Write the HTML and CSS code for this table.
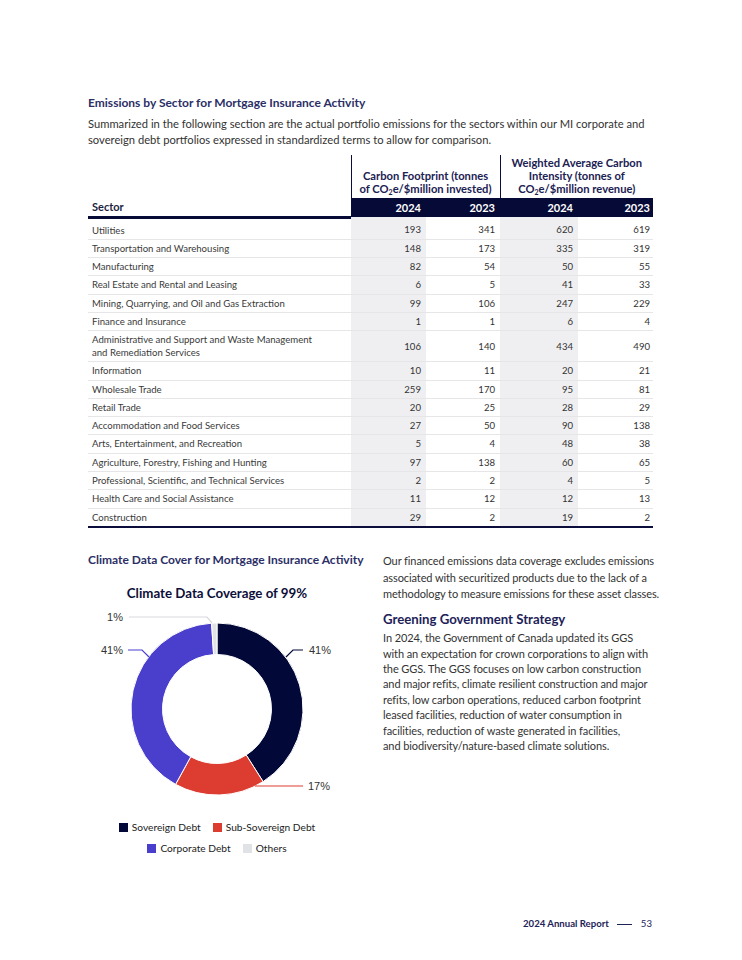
FILE: index.html
```html
<!DOCTYPE html>
<html lang="en">
<head>
<meta charset="utf-8">
<title>Emissions by Sector</title>
<link rel="stylesheet" href="styles.css">
</head>
<body>
<div class="page">
  <h2 class="sec-title">Emissions by Sector for Mortgage Insurance Activity</h2>
  <p class="intro">Summarized in the following section are the actual portfolio emissions for the sectors within our MI corporate and<br>sovereign debt portfolios expressed in standardized terms to allow for comparison.</p>

  <table class="em">
    <colgroup>
      <col class="c-sector"><col class="c-a"><col class="c-b"><col class="c-c"><col class="c-d">
    </colgroup>
    <thead>
      <tr class="grp">
        <th class="blank"></th>
        <th colspan="2" class="g">Carbon Footprint (tonnes<br>of CO<sub>2</sub>e/$million invested)</th>
        <th colspan="2" class="g">Weighted Average Carbon<br>Intensity (tonnes of<br>CO<sub>2</sub>e/$million revenue)</th>
      </tr>
      <tr class="yrs">
        <th class="sector">Sector</th>
        <th>2024</th><th>2023</th><th>2024</th><th class="last">2023</th>
      </tr>
    </thead>
    <tbody>
      <tr class="first"><td>Utilities</td><td class="s">193</td><td>341</td><td class="s">620</td><td class="last">619</td></tr>
      <tr><td>Transportation and Warehousing</td><td class="s">148</td><td>173</td><td class="s">335</td><td class="last">319</td></tr>
      <tr><td>Manufacturing</td><td class="s">82</td><td>54</td><td class="s">50</td><td class="last">55</td></tr>
      <tr><td>Real Estate and Rental and Leasing</td><td class="s">6</td><td>5</td><td class="s">41</td><td class="last">33</td></tr>
      <tr><td>Mining, Quarrying, and Oil and Gas Extraction</td><td class="s">99</td><td>106</td><td class="s">247</td><td class="last">229</td></tr>
      <tr><td>Finance and Insurance</td><td class="s">1</td><td>1</td><td class="s">6</td><td class="last">4</td></tr>
      <tr class="two"><td>Administrative and Support and Waste Management<br>and Remediation Services</td><td class="s">106</td><td>140</td><td class="s">434</td><td class="last">490</td></tr>
      <tr><td>Information</td><td class="s">10</td><td>11</td><td class="s">20</td><td class="last">21</td></tr>
      <tr><td>Wholesale Trade</td><td class="s">259</td><td>170</td><td class="s">95</td><td class="last">81</td></tr>
      <tr><td>Retail Trade</td><td class="s">20</td><td>25</td><td class="s">28</td><td class="last">29</td></tr>
      <tr><td>Accommodation and Food Services</td><td class="s">27</td><td>50</td><td class="s">90</td><td class="last">138</td></tr>
      <tr><td>Arts, Entertainment, and Recreation</td><td class="s">5</td><td>4</td><td class="s">48</td><td class="last">38</td></tr>
      <tr><td>Agriculture, Forestry, Fishing and Hunting</td><td class="s">97</td><td>138</td><td class="s">60</td><td class="last">65</td></tr>
      <tr><td>Professional, Scientific, and Technical Services</td><td class="s">2</td><td>2</td><td class="s">4</td><td class="last">5</td></tr>
      <tr><td>Health Care and Social Assistance</td><td class="s">11</td><td>12</td><td class="s">12</td><td class="last">13</td></tr>
      <tr class="end"><td>Construction</td><td class="s">29</td><td>2</td><td class="s">19</td><td class="last">2</td></tr>
    </tbody>
  </table>

  <div class="lower">
    <div class="left">
      <h3 class="sub-title">Climate Data Cover for Mortgage Insurance Activity</h3>
      <div class="chart">
        <div class="chart-title">Climate Data Coverage of 99%</div>
        <svg class="donut" width="258" height="200" viewBox="0 0 258 200" xmlns="http://www.w3.org/2000/svg">
          <g stroke="#ffffff" stroke-width="1">
            <path fill="#020838" d="M129 18 A86 86 0 0 1 175.08 176.61 L158.20 150.01 A54.5 54.5 0 0 0 129 49.5 Z"/>
            <path fill="#dd3d31" d="M175.08 176.61 A86 86 0 0 1 87.57 179.36 L102.74 151.76 A54.5 54.5 0 0 0 158.20 150.01 Z"/>
            <path fill="#4a3fcd" d="M87.57 179.36 A86 86 0 0 1 123.60 18.17 L125.58 49.61 A54.5 54.5 0 0 0 102.74 151.76 Z"/>
            <path fill="#e1e2e6" d="M123.60 18.17 A86 86 0 0 1 129 18 L129 49.5 A54.5 54.5 0 0 0 125.58 49.61 Z"/>
          </g>
          <g fill="none" stroke-width="1.2">
            <polyline stroke="#d9d9dd" points="41,12 119,12 124,18"/>
            <polyline stroke="#4a3fcd" points="40,45 54,45 61,52"/>
            <polyline stroke="#020838" points="198,52 205,45 215,45"/>
            <polyline stroke="#dd3d31" points="167,181 215,181"/>
          </g>
          <g class="lbl">
            <text x="35" y="16" text-anchor="end">1%</text>
            <text x="35" y="49" text-anchor="end">41%</text>
            <text x="221" y="49">41%</text>
            <text x="220" y="185">17%</text>
          </g>
        </svg>
        <div class="legend">
          <div class="leg-row">
            <span class="leg"><i class="sw sov"></i>Sovereign Debt</span>
            <span class="leg"><i class="sw sub"></i>Sub-Sovereign Debt</span>
          </div>
          <div class="leg-row">
            <span class="leg"><i class="sw corp"></i>Corporate Debt</span>
            <span class="leg"><i class="sw oth"></i>Others</span>
          </div>
        </div>
      </div>
    </div>
    <div class="right">
      <p class="body">Our financed emissions data coverage excludes emissions<br>associated with securitized products due to the lack of a<br>methodology to measure emissions for these asset classes.</p>
      <h3 class="side-title">Greening Government Strategy</h3>
      <p class="body tight">In 2024, the Government of Canada updated its GGS<br>with an expectation for crown corporations to align with<br>the GGS. The GGS focuses on low carbon construction<br>and major refits, climate resilient construction and major<br>refits, low carbon operations, reduced carbon footprint<br>leased facilities, reduction of water consumption in<br>facilities, reduction of waste generated in facilities,<br>and biodiversity/nature-based climate solutions.</p>
    </div>
  </div>

  <footer class="foot">
    <span class="foot-title">2024 Annual Report</span>
    <span class="foot-dash"></span>
    <span class="foot-num">53</span>
  </footer>
</div>
</body>
</html>
```

FILE: styles.css
```css
* { box-sizing: border-box; }
html, body { margin: 0; padding: 0; background: #ffffff; }
body {
  font-family: "Lato", "Open Sans", sans-serif;
  color: #333333;
}
.page {
  width: 742px;
  min-height: 960px;
  padding: 95px 89px 29px 88px;
  display: flex;
  flex-direction: column;
}
.sec-title {
  margin: 0 0 5px 0;
  font-size: 12px;
  line-height: 16px;
  font-weight: 700;
  color: #2b2f66;
}
.intro {
  margin: 0 0 7px 0;
  font-size: 11.2px;
  line-height: 16px;
  color: #333333;
  white-space: nowrap;
}

/* table */
.em {
  width: 565px;
  border-collapse: collapse;
  table-layout: fixed;
  font-size: 9.6px;
}
.c-sector { width: 263px; }
.c-a { width: 75px; }
.c-b { width: 74px; }
.c-c { width: 78px; }
.c-d { width: 75px; }
.em th, .em td { padding: 0; }
.grp th {
  height: 43px;
  vertical-align: bottom;
  padding-bottom: 3px;
  font-size: 11.2px;
  line-height: 13px;
  font-weight: 700;
  color: #1b2152;
  text-align: center;
}
.grp th.g { border-left: 1.5px solid #0b0e3a; }
.grp th sub { font-size: 7px; line-height: 0; vertical-align: -2px; }
.yrs th {
  height: 19px;
  background: #060a36;
  color: #ffffff;
  font-size: 11px;
  font-weight: 700;
  text-align: right;
  padding-right: 5px;
  line-height: 16px;
}
.yrs th.last { padding-right: 3px; }
.yrs th.sector {
  background: #ffffff;
  color: #1b1f3f;
  text-align: left;
  padding-left: 4px;
  border-bottom: 3px solid #060a36;
}
.em td {
  line-height: 17.3px;
  border-bottom: 1px solid #e6e6e8;
  text-align: right;
  padding-right: 5px;
  color: #333333;
  vertical-align: middle;
}
.em td:first-child {
  text-align: left;
  padding-left: 4px;
  color: #3a3a3a;
}
.em td.s { background: #efeff1; }
.em td.last { padding-right: 3px; }
.em tr.first td { padding-top: 3px; }
.em tr.two td { line-height: 13px; padding-top: 2px; padding-bottom: 2px; }
.em tr.end td { border-bottom: 2px solid #0b0e3a; }

/* lower */
.lower {
  margin-top: 24px;
  display: grid;
  grid-template-columns: 280px 270px;
  column-gap: 15px;
}
.sub-title {
  margin: 0;
  font-size: 12px;
  line-height: 16px;
  font-weight: 700;
  color: #2b2f66;
  white-space: nowrap;
}
.chart { width: 258px; }
.chart-title {
  margin-top: 16px;
  text-align: center;
  font-size: 13.3px;
  line-height: 18px;
  font-weight: 700;
  color: #0c0f3a;
}
.donut { display: block; margin-top: 3px; overflow: visible; }
.lbl text {
  font-family: "Liberation Sans", Arial, sans-serif;
  font-size: 11px;
  fill: #333333;
}
.legend { margin-top: 15px; display: flex; flex-direction: column; align-items: center; row-gap: 6px; }
.leg-row { display: flex; column-gap: 12px; font-size: 10.2px; line-height: 15px; color: #222222; }
.leg { display: flex; align-items: center; }
.sw { display: inline-block; width: 9px; height: 9px; margin-right: 4px; }
.sw.sov { background: #020838; }
.sw.sub { background: #dd3d31; }
.sw.corp { background: #4a3fcd; }
.sw.oth { background: #e1e2e6; }

.right { padding-top: 1.5px; }
.body {
  margin: 0;
  font-size: 11px;
  letter-spacing: -0.1px;
  line-height: 16.5px;
  color: #333333;
  white-space: nowrap;
}
.body.tight { line-height: 15.4px; }
.side-title {
  margin: 7px 0 2.3px 0;
  font-size: 13.2px;
  line-height: 18px;
  font-weight: 700;
  color: #1d2258;
}

/* footer */
.foot {
  margin-top: auto;
  display: flex;
  justify-content: flex-end;
  align-items: center;
  font-size: 9.6px;
  line-height: 14px;
  color: #1d2258;
}
.foot-title { font-weight: 700; }
.foot-dash { width: 15px; height: 1px; background: #1d2258; margin: 0 9px 0 8px; }
.foot-num { font-weight: 400; padding-right: 1px; }
```
